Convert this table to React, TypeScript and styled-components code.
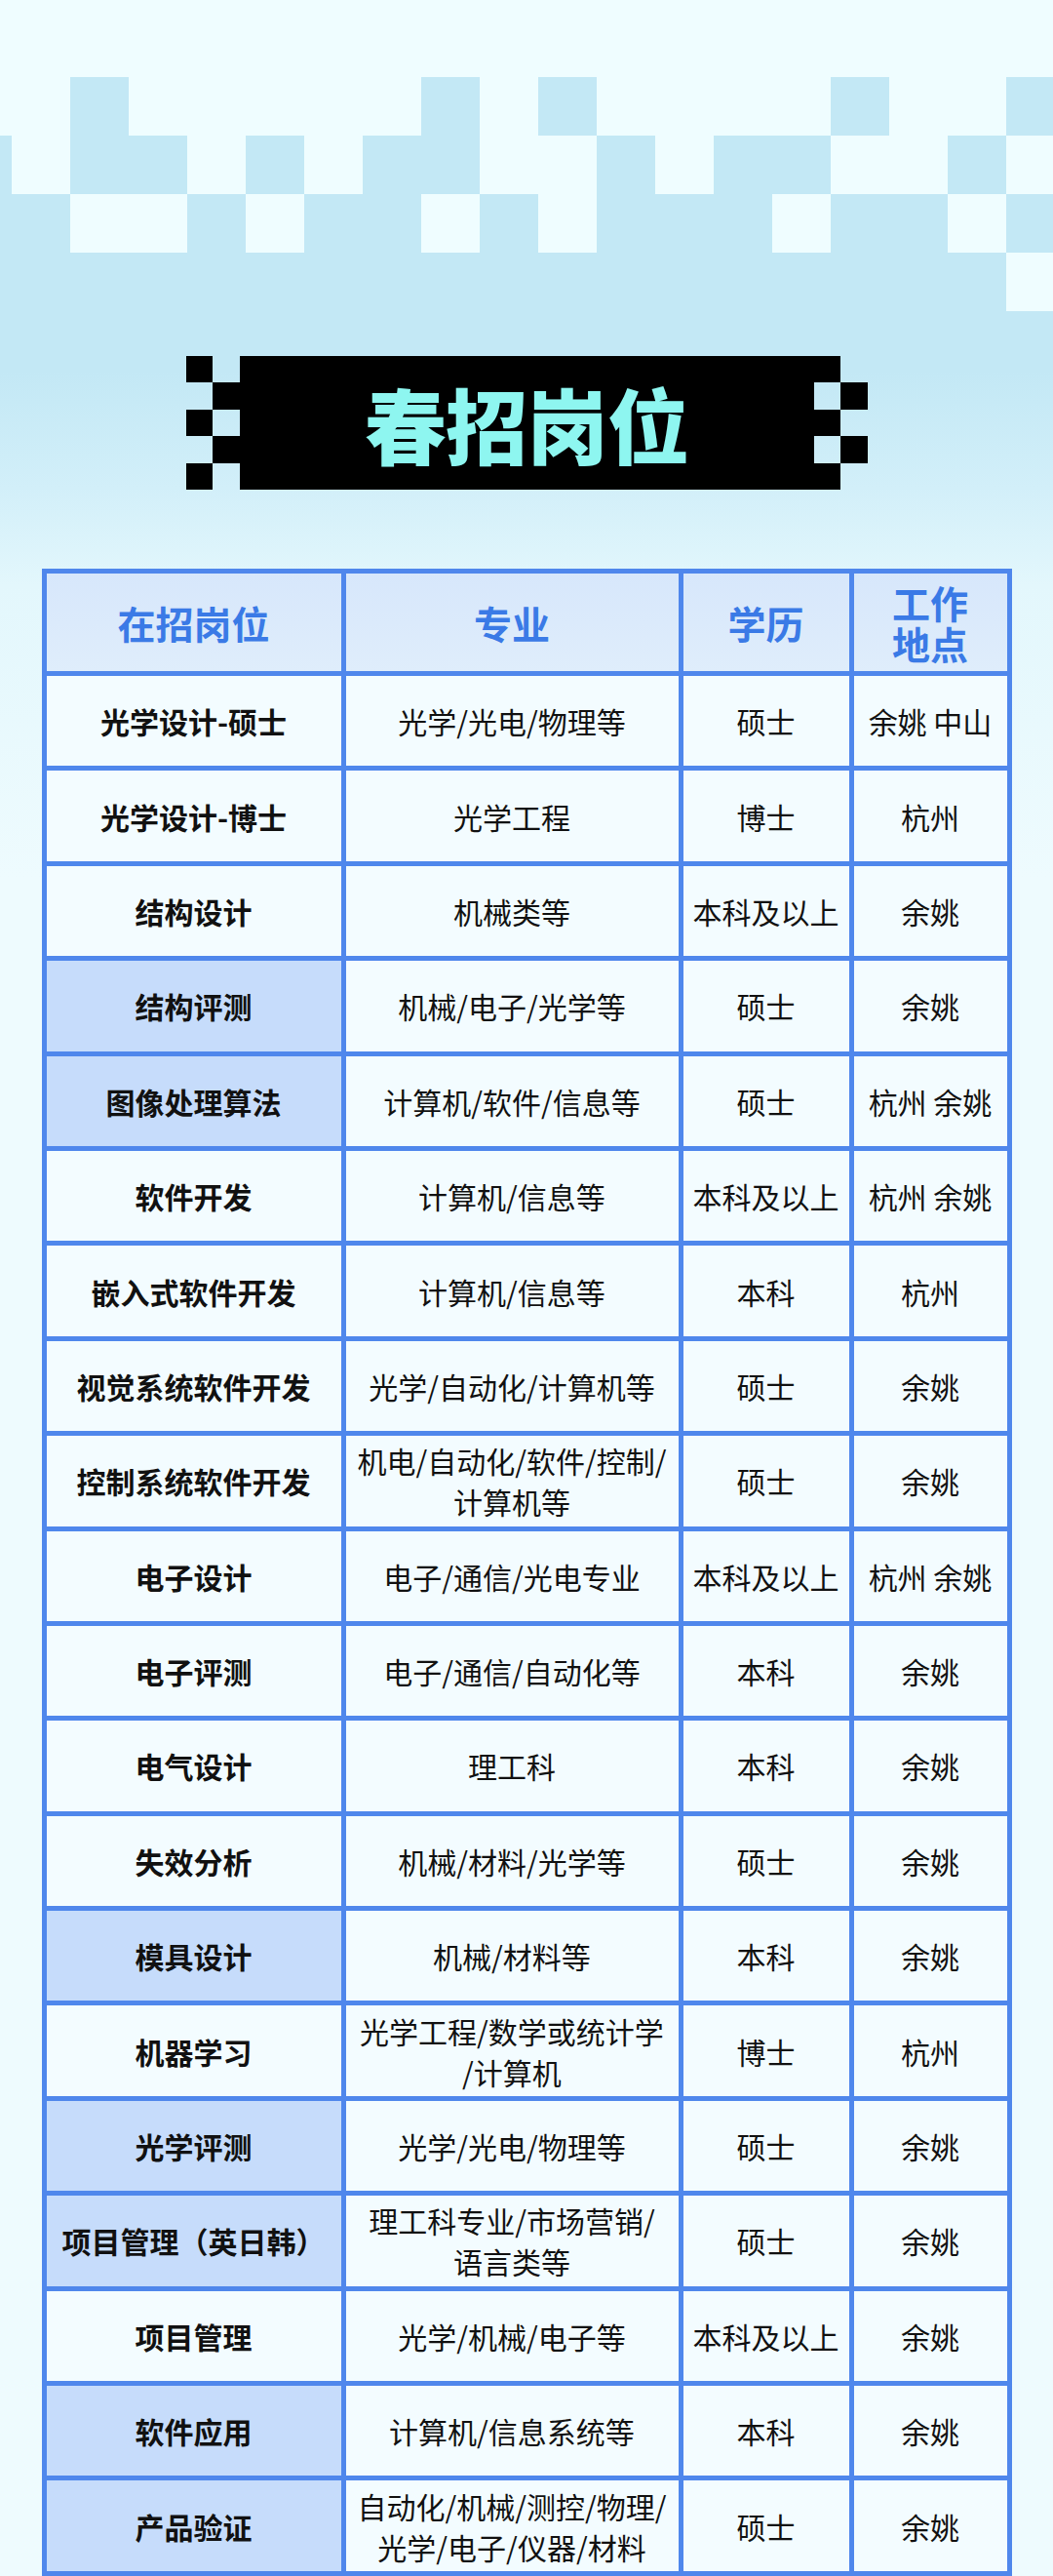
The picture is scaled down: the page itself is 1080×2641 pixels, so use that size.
import React from 'react';
import styled, { createGlobalStyle } from 'styled-components';

interface Job {
  title: string;
  major: string[];
  degree: string;
  city: string;
  marked?: boolean;
}

const jobs: Job[] = [
  { title: '光学设计-硕士', major: ['光学/光电/物理等'], degree: '硕士', city: '余姚 中山' },
  { title: '光学设计-博士', major: ['光学工程'], degree: '博士', city: '杭州' },
  { title: '结构设计', major: ['机械类等'], degree: '本科及以上', city: '余姚' },
  { title: '结构评测', major: ['机械/电子/光学等'], degree: '硕士', city: '余姚', marked: true },
  { title: '图像处理算法', major: ['计算机/软件/信息等'], degree: '硕士', city: '杭州 余姚', marked: true },
  { title: '软件开发', major: ['计算机/信息等'], degree: '本科及以上', city: '杭州 余姚' },
  { title: '嵌入式软件开发', major: ['计算机/信息等'], degree: '本科', city: '杭州' },
  { title: '视觉系统软件开发', major: ['光学/自动化/计算机等'], degree: '硕士', city: '余姚' },
  { title: '控制系统软件开发', major: ['机电/自动化/软件/控制/', '计算机等'], degree: '硕士', city: '余姚' },
  { title: '电子设计', major: ['电子/通信/光电专业'], degree: '本科及以上', city: '杭州 余姚' },
  { title: '电子评测', major: ['电子/通信/自动化等'], degree: '本科', city: '余姚' },
  { title: '电气设计', major: ['理工科'], degree: '本科', city: '余姚' },
  { title: '失效分析', major: ['机械/材料/光学等'], degree: '硕士', city: '余姚' },
  { title: '模具设计', major: ['机械/材料等'], degree: '本科', city: '余姚', marked: true },
  { title: '机器学习', major: ['光学工程/数学或统计学', '/计算机'], degree: '博士', city: '杭州' },
  { title: '光学评测', major: ['光学/光电/物理等'], degree: '硕士', city: '余姚', marked: true },
  { title: '项目管理（英日韩）', major: ['理工科专业/市场营销/', '语言类等'], degree: '硕士', city: '余姚', marked: true },
  { title: '项目管理', major: ['光学/机械/电子等'], degree: '本科及以上', city: '余姚' },
  { title: '软件应用', major: ['计算机/信息系统等'], degree: '本科', city: '余姚', marked: true },
  { title: '产品验证', major: ['自动化/机械/测控/物理/', '光学/电子/仪器/材料'], degree: '硕士', city: '余姚', marked: true },
];

// pixel band above the title, one string per row, B = blue cell
const band = [
  'LLBLLLLLBLBLLLLBLLB',
  'BLBBLBLBBLLBLBBLLBL',
  'BBLLBLBBLBLBBBLBBLB',
  'BBBBBBBBBBBBBBBBBBL',
];

// 2 x 5 checker beside the title bar, row by row
const checker = [true, false, false, true, true, false, false, true, true, false];

const GlobalStyle = createGlobalStyle`
  html, body {
    margin: 0;
    padding: 0;
  }
  body {
    font-family: "Noto Sans CJK SC", "Noto Sans", sans-serif;
    background: #eefbfe;
  }
`;

const Page = styled.div`
  width: 1080px;
  min-height: 2641px;
  overflow: hidden;
  background: linear-gradient(
    to bottom,
    #effdff 0px,
    #effdff 79px,
    #c3e8f5 79px,
    #c3e8f5 380px,
    #d2eff9 500px,
    #e3f7fc 600px,
    #eefbfe 900px,
    #eefbfe 100%
  );
`;

const Band = styled.div`
  margin-top: 79px;
  margin-left: -48px;
  display: grid;
  grid-template-columns: repeat(19, 60px);
  grid-template-rows: repeat(4, 60px);
`;

const BandCell = styled.div<{ $blue: boolean }>`
  background: ${({ $blue }) => ($blue ? '#c3e8f5' : '#effdff')};
`;

const TitleWrap = styled.div`
  margin-top: 46px;
  display: flex;
  justify-content: center;
  height: 137px;
`;

const Checker = styled.div`
  display: grid;
  grid-template-columns: repeat(2, 27.5px);
  grid-template-rows: repeat(5, 27.4px);
`;

const CheckerCell = styled.div<{ $dark: boolean }>`
  background: ${({ $dark }) => ($dark ? '#000' : 'transparent')};
`;

const TitleBar = styled.div`
  width: 589px;
  background: #000;
  display: flex;
  align-items: center;
  justify-content: center;
`;

const TitleText = styled.h1`
  margin: 0;
  font-family: "Noto Sans CJK SC", sans-serif;
  font-weight: 900;
  font-size: 84px;
  line-height: 1;
  color: #8ef6f0;
  letter-spacing: -1px;
`;

const Table = styled.div`
  margin: 81px auto 0;
  width: 995px;
  box-sizing: border-box;
  padding: 5px;
  display: grid;
  grid-template-columns: 302px 341px 170px 157px;
  grid-template-rows: 100px repeat(20, 92.4px);
  gap: 5px;
  background: #4f87ec;
`;

const HeadCell = styled.div`
  background: linear-gradient(to bottom, #d7e7fb, #dfedfb);
  color: #3a7ae6;
  font-weight: 700;
  font-size: 39px;
  line-height: 42px;
  display: flex;
  flex-direction: column;
  align-items: center;
  justify-content: center;
  text-align: center;
`;

const Cell = styled.div<{ $bold?: boolean; $marked?: boolean }>`
  background: ${({ $marked }) => ($marked ? '#c6dcfb' : '#f3fcff')};
  color: #111;
  font-weight: ${({ $bold }) => ($bold ? 700 : 400)};
  font-size: 30px;
  line-height: 42px;
  display: flex;
  flex-direction: column;
  align-items: center;
  justify-content: center;
  text-align: center;
  white-space: nowrap;
`;

export default function App() {
  return (
    <Page>
      <GlobalStyle />
      <Band>
        {band.map((row, r) =>
          row.split('').map((c, i) => <BandCell key={`${r}-${i}`} $blue={c === 'B'} />)
        )}
      </Band>

      <TitleWrap>
        <Checker>
          {checker.map((d, i) => (
            <CheckerCell key={i} $dark={d} />
          ))}
        </Checker>
        <TitleBar>
          <TitleText>春招岗位</TitleText>
        </TitleBar>
        <Checker>
          {checker.map((d, i) => (
            <CheckerCell key={i} $dark={d} />
          ))}
        </Checker>
      </TitleWrap>

      <Table>
        <HeadCell>在招岗位</HeadCell>
        <HeadCell>专业</HeadCell>
        <HeadCell>学历</HeadCell>
        <HeadCell>
          <span>工作</span>
          <span>地点</span>
        </HeadCell>
        {jobs.map((job) => (
          <React.Fragment key={job.title}>
            <Cell $bold $marked={job.marked}>
              {job.title}
            </Cell>
            <Cell>
              {job.major.map((line) => (
                <span key={line}>{line}</span>
              ))}
            </Cell>
            <Cell>{job.degree}</Cell>
            <Cell>{job.city}</Cell>
          </React.Fragment>
        ))}
      </Table>
    </Page>
  );
}
